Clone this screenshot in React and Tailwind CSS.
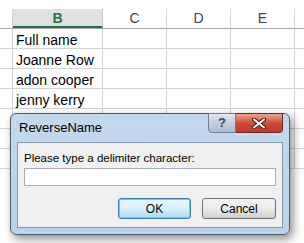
import React from 'react'

const ROWS = ['Full name', 'Joanne Row', 'adon cooper', 'jenny kerry', '', '', '']

const cell = 'h-[20px] border-r border-b border-[#d4d4d4] shrink-0'

export default function App() {
  return (
    <div className="relative w-[304px] h-[243px] overflow-hidden bg-white font-['Liberation_Sans',sans-serif]">
      {/* Sheet */}
      <div className="pt-[9px]">
        {/* column headers */}
        <div className="flex h-[20px] border-b border-[#ababab] text-[14px] leading-[19px]">
          <div className="w-[13px] border-r border-[#d4d4d4] shrink-0" />
          <div className="w-[90px] shrink-0 bg-[#e1e1e1] border-r border-[#c6c6c6] border-b-2 border-b-[#217346] text-center font-bold text-[#217346]">B</div>
          <div className="w-[64px] shrink-0 border-r border-[#d4d4d4] text-center text-[#444]">C</div>
          <div className="w-[64px] shrink-0 border-r border-[#d4d4d4] text-center text-[#444]">D</div>
          <div className="w-[64px] shrink-0 border-r border-[#d4d4d4] text-center text-[#444]">E</div>
          <div className="w-[20px] shrink-0" />
        </div>
        {ROWS.map((r, i) => (
          <div key={i} className="flex text-[14px] leading-[20px] text-black">
            <div className={`${cell} w-[13px]`} />
            <div className={`${cell} w-[90px] pl-[3px] pt-[1px]`}>{r}</div>
            <div className={`${cell} w-[64px]`} />
            <div className={`${cell} w-[64px]`} />
            <div className={`${cell} w-[64px]`} />
            <div className={`${cell} w-[20px] border-r-0`} />
          </div>
        ))}
      </div>

      {/* ReverseName dialog */}
      <div className="absolute left-[10px] top-[113px] w-[280px] h-[122px] rounded-[6px] border border-[#4f5b68] bg-gradient-to-b from-[#c4d8ee] to-[#bad2ea] shadow-[3px_4px_10px_rgba(0,0,0,0.45)] px-[6px] pb-[6px] flex flex-col">
        <div className="flex h-[28px] items-start">
          <div className="flex-1 pl-[2px] pt-[6px] text-[13px] leading-[15px] text-black">ReverseName</div>
          <div className="flex -mt-px">
            <div className="w-[28px] h-[20px] rounded-bl-[4px] border border-[#6e7f93] bg-gradient-to-b from-[#dfe7f1] via-[#c2cfdd] to-[#aebfd2] flex items-center justify-center text-[13px] font-bold text-[#3a4656]">?</div>
            <div className="w-[47px] h-[20px] rounded-br-[4px] border border-l-0 border-[#6b2a24] bg-gradient-to-b from-[#e8a594] via-[#cd4b3a] to-[#c0392b] flex items-center justify-center">
              <svg width="14" height="11" viewBox="0 0 14 11">
                <path d="M2 1.5 L12 9.5 M12 1.5 L2 9.5" stroke="#4a1e18" strokeWidth="4" strokeLinecap="round" />
                <path d="M2 1.5 L12 9.5 M12 1.5 L2 9.5" stroke="#fff" strokeWidth="2" strokeLinecap="round" />
              </svg>
            </div>
          </div>
        </div>
        <div className="flex-1 border border-[#8797aa] bg-[#f0f0f0] px-[6px] pt-[8px]">
          <div className="text-[11.5px] leading-[15px] text-black">Please type a delimiter character:</div>
          <div className="mt-[2px] h-[18px] border border-[#abadb3] bg-white" />
          <div className="mt-[12px] flex justify-end gap-[11px]">
            <div className="w-[73px] h-[21px] rounded-[3px] border border-[#3c7fb1] bg-gradient-to-b from-[#eaf6fd] via-[#d9f0fc] to-[#a7d9f5] shadow-[inset_0_0_0_1px_#6fc8f1] flex items-center justify-center text-[12px] text-black">OK</div>
            <div className="w-[74px] h-[21px] rounded-[3px] border border-[#707070] bg-gradient-to-b from-[#f2f2f2] via-[#ebebeb] to-[#cfcfcf] flex items-center justify-center text-[12px] text-black">Cancel</div>
          </div>
        </div>
      </div>
    </div>
  )
}
